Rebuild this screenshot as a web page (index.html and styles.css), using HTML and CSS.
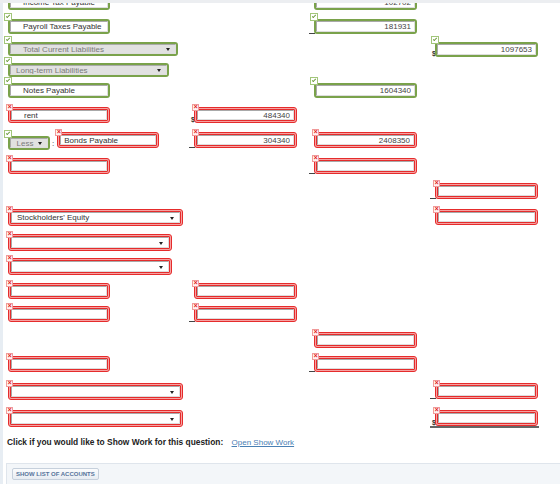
FILE: index.html
```html
<!DOCTYPE html>
<html>
<head>
  <meta charset="utf-8">
  <meta name="viewport" content="width=device-width, initial-scale=1">
  <title>Balance Sheet</title>
  <link rel="stylesheet" href="styles.css">
</head>
<body>
  <div class="topbar"></div>
  <div class="page">
    <form class="sheet" action="#">
      <div class="row">
        <div class="c1"><span class="fld ok"><i class="mk"></i><input class="ind" value="Income Tax Payable"></span></div>
        <div class="c3 slot"><span class="pre"></span><span class="fld ok"><i class="mk"></i><input class="num" value="102702"></span></div>
      </div>
      <div class="row">
        <div class="c1"><span class="fld ok"><i class="mk"></i><input class="ind" value="Payroll Taxes Payable"></span></div>
        <div class="c3 slot"><span class="pre ul"></span><span class="fld ok"><i class="mk"></i><input class="num" value="181931"></span></div>
      </div>
      <div class="row">
        <div class="c1"><span class="fld ok sel w170"><i class="mk"></i><select class="gray ind"><option>Total Current Liabilities</option></select></span></div>
        <div class="c4 slot"><span class="pre">$</span><span class="fld ok"><i class="mk"></i><input class="num" value="1097653"></span></div>
      </div>
      <div class="row">
        <div class="c1"><span class="fld ok sel w161"><i class="mk"></i><select class="gray"><option>Long-term Liabilities</option></select></span></div>
      </div>
      <div class="row">
        <div class="c1"><span class="fld ok"><i class="mk"></i><input class="ind" value="Notes Payable"></span></div>
        <div class="c3 slot"><span class="pre"></span><span class="fld ok"><i class="mk"></i><input class="num" value="1604340"></span></div>
      </div>
      <div class="row">
        <div class="c1"><span class="fld bad"><i class="mk"></i><input class="ind" value="rent"></span></div>
        <div class="c2 slot"><span class="pre">$</span><span class="fld bad"><i class="mk"></i><input class="num" value="484340"></span></div>
      </div>
      <div class="row">
        <div class="c1 pair">
          <span class="fld ok sel w42 less"><i class="mk"></i><select class="gray mid"><option>Less</option></select></span>
          <span class="colon">:</span>
          <span class="fld bad"><i class="mk"></i><input value="Bonds Payable"></span>
        </div>
        <div class="c2 slot"><span class="pre ul"></span><span class="fld bad"><i class="mk"></i><input class="num" value="304340"></span></div>
        <div class="c3 slot"><span class="pre"></span><span class="fld bad"><i class="mk"></i><input class="num" value="2408350"></span></div>
      </div>
      <div class="row">
        <div class="c1"><span class="fld bad"><i class="mk"></i><input></span></div>
        <div class="c3 slot"><span class="pre ul"></span><span class="fld bad"><i class="mk"></i><input class="num"></span></div>
      </div>
      <div class="row">
        <div class="c4 slot"><span class="pre ul"></span><span class="fld bad"><i class="mk"></i><input class="num"></span></div>
      </div>
      <div class="row">
        <div class="c1"><span class="fld bad sel w175"><i class="mk"></i><select><option>Stockholders' Equity</option></select></span></div>
        <div class="c4 slot"><span class="pre"></span><span class="fld bad"><i class="mk"></i><input class="num"></span></div>
      </div>
      <div class="row">
        <div class="c1"><span class="fld bad sel w164"><i class="mk"></i><select><option></option></select></span></div>
      </div>
      <div class="row">
        <div class="c1"><span class="fld bad sel w164"><i class="mk"></i><select><option></option></select></span></div>
      </div>
      <div class="row">
        <div class="c1"><span class="fld bad"><i class="mk"></i><input></span></div>
        <div class="c2 slot"><span class="pre"></span><span class="fld bad"><i class="mk"></i><input class="num"></span></div>
      </div>
      <div class="row">
        <div class="c1"><span class="fld bad"><i class="mk"></i><input></span></div>
        <div class="c2 slot"><span class="pre ul"></span><span class="fld bad"><i class="mk"></i><input class="num"></span></div>
      </div>
      <div class="row">
        <div class="c3 slot"><span class="pre"></span><span class="fld bad"><i class="mk"></i><input class="num"></span></div>
      </div>
      <div class="row">
        <div class="c1"><span class="fld bad"><i class="mk"></i><input></span></div>
        <div class="c3 slot"><span class="pre ul"></span><span class="fld bad"><i class="mk"></i><input class="num"></span></div>
      </div>
      <div class="row">
        <div class="c1"><span class="fld bad sel w175"><i class="mk"></i><select><option></option></select></span></div>
        <div class="c4 slot"><span class="pre ul"></span><span class="fld bad"><i class="mk"></i><input class="num"></span></div>
      </div>
      <div class="row">
        <div class="c1"><span class="fld bad sel w175"><i class="mk"></i><select><option></option></select></span></div>
        <div class="c4 slot total"><span class="pre">$</span><span class="fld bad"><i class="mk"></i><input class="num"></span></div>
      </div>
    </form>

    <p class="showwork">
      <strong>Click if you would like to Show Work for this question:</strong>
      <a href="#">Open Show Work</a>
    </p>

    <div class="panel">
      <button type="button" class="btn">Show List of Accounts</button>
    </div>
  </div>
</body>
</html>
```

FILE: styles.css
```css
* {
  box-sizing: border-box;
}
body {
  margin: 0;
  background: #e7edf3;
  font-family: "Liberation Sans", Arial, sans-serif;
  font-size: 8px;
  color: #333;
}
.topbar {
  position: fixed;
  top: 0;
  left: 0;
  right: 0;
  height: 3px;
  background: #eceef1;
  z-index: 5;
}
.page {
  margin-left: 3px;
  min-height: 484px;
  background: #fff;
  overflow: hidden;
}

/* worksheet grid */
.sheet {
  display: grid;
  grid-template-rows: 24px 23px 21px 20px 24px 25px 26px 25px 26px 25px 24px 25px 23px 26px 24px 27px 27px 20px;
  margin-top: -5px;
}
.row {
  display: grid;
  grid-template-columns: 186px 120px 121px 1fr;
  align-items: start;
}
.c1 {
  grid-column: 1;
  padding-left: 5px;
}
.c2 {
  grid-column: 2;
}
.c3 {
  grid-column: 3;
}
.c4 {
  grid-column: 4;
}
.slot {
  display: flex;
  align-items: stretch;
}
.slot .fld {
  flex: 0 0 103px;
}
.pre {
  width: 6px;
  margin-right: -1px;
  display: flex;
  align-items: flex-end;
  justify-content: flex-end;
  font-size: 7px;
  font-weight: bold;
  line-height: 7px;
  color: #333;
}
.pre.ul {
  border-bottom: 1px solid #444;
}
.total {
  border-bottom: 2px solid #666;
  width: 109px;
}
.pair {
  display: flex;
  align-items: flex-start;
}
.colon {
  margin: 8px 3px 0 2px;
  font-size: 8px;
  line-height: 8px;
}

/* fields */
.fld {
  position: relative;
  display: flex;
  width: 102px;
  height: 15px;
  border-radius: 3px;
}
.fld.ok {
  border: 2px solid #7aa24b;
}
.fld.bad {
  height: 16px;
  border: 3px double #e52c2c;
  background: #f6a2a2;
}
.fld input,
.fld select {
  flex: 1;
  min-width: 0;
  height: 100%;
  margin: 0;
  padding: 0 3px;
  border: 1px solid;
  border-color: #a9a9a9 #dedede #dedede #a9a9a9;
  border-radius: 0;
  background: #fff;
  font: inherit;
  color: #333;
  outline: none;
}
.fld select {
  -webkit-appearance: none;
  appearance: none;
  padding-left: 5px;
}
.fld .ind {
  padding-left: 12px;
}
.fld .num {
  text-align: right;
  color: #444;
}
.fld .gray {
  background: #e1e1e1;
  color: #7a7a7a;
}
.fld .mid {
  text-align: center;
  text-align-last: center;
  padding: 0 8px 0 0;
}
.sel::after {
  content: "";
  position: absolute;
  right: 6px;
  top: 50%;
  margin-top: -1px;
  border-left: 2px solid transparent;
  border-right: 2px solid transparent;
  border-top: 3px solid #222;
}
.fld.sel.bad {
  height: 17px;
}
.fld.sel.ok {
  height: 14px;
}
.w42 { width: 42px; }
.w161 { width: 161px; }
.w164 { width: 164px; }
.w170 { width: 170px; }
.w175 { width: 175px; }
.less {
  margin-top: 4px;
}

/* check / cross badges */
.mk {
  position: absolute;
  z-index: 1;
  background: #fff;
}
.ok .mk {
  left: -6px;
  top: -8px;
  width: 8px;
  height: 8px;
  border: 1px solid #a2c67a;
}
.ok .mk::after {
  content: "";
  position: absolute;
  left: 1px;
  top: 1px;
  width: 3px;
  height: 1px;
  border-left: 1px solid #6f9c3f;
  border-bottom: 1px solid #6f9c3f;
  transform: rotate(-45deg);
}
.bad .mk {
  left: -5px;
  top: -6px;
  width: 7px;
  height: 7px;
  border: 1px solid #f19b9b;
  background: #fff2f2;
}
.bad .mk::after {
  content: "\00d7";
  position: absolute;
  left: 0;
  right: 0;
  top: -1px;
  text-align: center;
  font-size: 7px;
  line-height: 6px;
  font-weight: bold;
  color: #e01919;
}

/* footer */
.showwork {
  margin: 7px 0 0 4px;
  font-size: 8.4px;
  line-height: 10px;
  color: #222;
}
.showwork a {
  margin-left: 6px;
  font-size: 8px;
  color: #4a80b4;
}
.panel {
  margin: 15px 0 0 3px;
  height: 40px;
  padding: 4px 5px;
  background: #f3f6f9;
  border-top: 1px solid #dfe5ec;
  border-left: 1px solid #dfe5ec;
}
.btn {
  height: 12px;
  padding: 0 3px;
  border: 1px solid #c6d0dc;
  border-radius: 2px;
  background: linear-gradient(#fbfcfd, #e7ecf2);
  font-family: inherit;
  font-size: 6px;
  font-weight: bold;
  text-transform: uppercase;
  color: #56739a;
  cursor: pointer;
}
```
